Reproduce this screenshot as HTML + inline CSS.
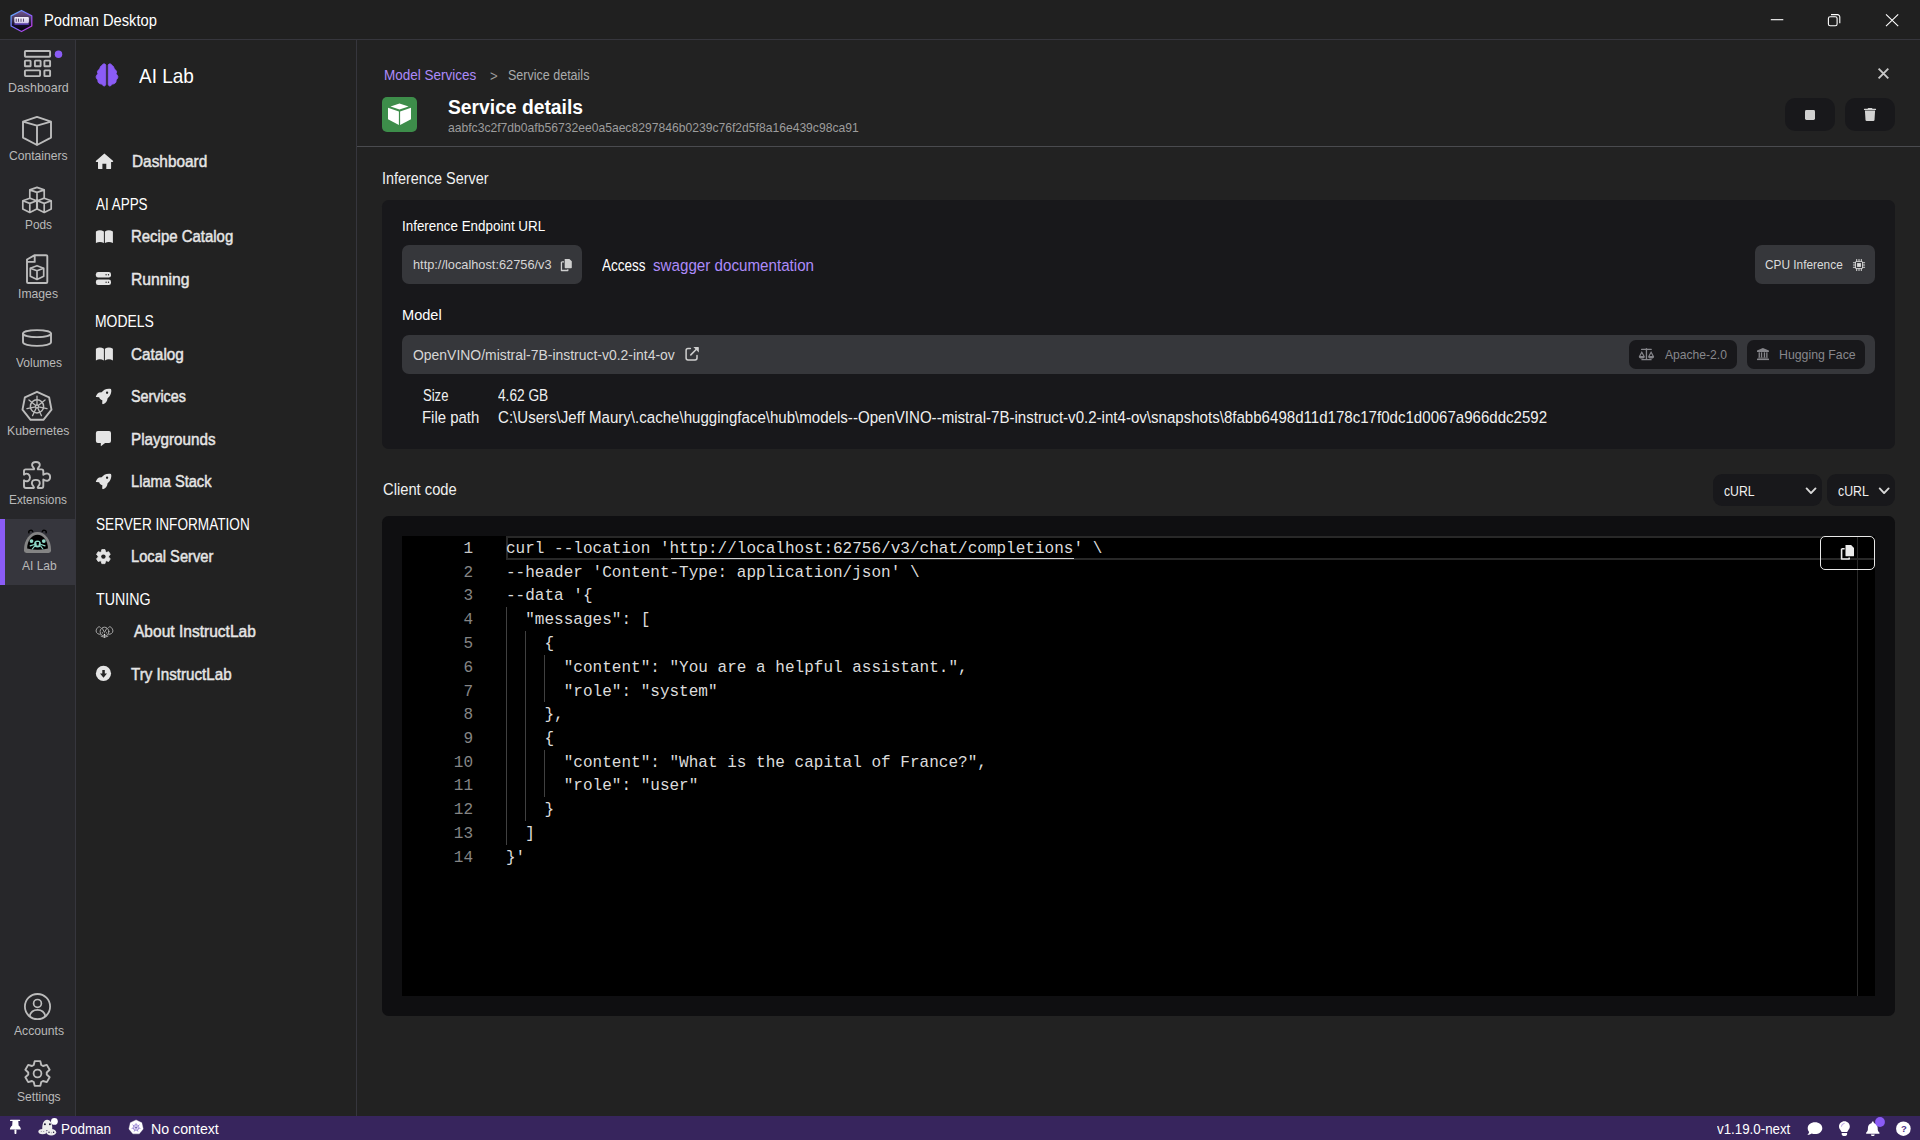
<!DOCTYPE html>
<html lang="en">
<head>
<meta charset="utf-8">
<title>Podman Desktop</title>
<style>
html,body{margin:0;padding:0}
body{width:1920px;height:1140px;overflow:hidden;background:#222222;position:relative;font-family:"Liberation Sans",sans-serif;color:#fff}
.b{position:absolute;box-sizing:border-box}
.t{position:absolute;white-space:pre;line-height:1;transform-origin:0 50%;font-family:"Liberation Sans",sans-serif}
.i{position:absolute;overflow:visible}
.ln{position:absolute;width:71px;text-align:right;font-family:"Liberation Mono",monospace;font-size:16.7px;line-height:19px;color:#858585;white-space:pre;transform-origin:100% 50%;transform:scaleX(0.9604)}
.cl{position:absolute;left:506.3px;font-family:"Liberation Mono",monospace;font-size:16.7px;line-height:19px;color:#dcdcdc;white-space:pre;transform-origin:0 50%;transform:scaleX(0.9604)}
.g{position:absolute;width:1px;background:#404040}
</style>
</head>
<body>
<!-- title bar -->
<div class="b" style="left:0;top:0;width:1920px;height:40px;background:#202020;border-bottom:1px solid #36363d"></div>
<!-- global nav -->
<div class="b" style="left:0;top:40px;width:76px;height:1076px;background:#27272a;border-right:1px solid #36363d"></div>
<div class="b" style="left:0;top:519px;width:75px;height:66px;background:#36363d;border-left:5px solid #8b5cf6"></div>
<!-- secondary nav -->
<div class="b" style="left:76px;top:40px;width:281px;height:1076px;background:#222222;border-right:1px solid #36363d"></div>
<!-- header border -->
<div class="b" style="left:357px;top:146px;width:1563px;height:1px;background:#4a4b4f"></div>
<!-- header buttons -->
<div class="b" style="left:382px;top:97px;width:35px;height:35px;border-radius:5px;background:#3d8d4a"></div>
<div class="b" style="left:1785px;top:98px;width:50px;height:33px;border-radius:10px;background:#18181b"></div>
<div class="b" style="left:1845px;top:98px;width:50px;height:33px;border-radius:10px;background:#18181b"></div>
<div class="b" style="left:1805px;top:109.5px;width:10.2px;height:10.2px;border-radius:1.4px;background:#d0d0d0"></div>
<!-- inference card -->
<div class="b" style="left:382px;top:200px;width:1513px;height:249px;border-radius:6.5px;background:#18181b"></div>
<div class="b" style="left:402px;top:245px;width:180px;height:39px;border-radius:7px;background:#36373b"></div>
<div class="b" style="left:1755px;top:245px;width:120px;height:39px;border-radius:7px;background:#36373b"></div>
<div class="b" style="left:402px;top:335px;width:1473px;height:39px;border-radius:7px;background:#36373b"></div>
<div class="b" style="left:1629px;top:340px;width:108px;height:29px;border-radius:7px;background:#18181b"></div>
<div class="b" style="left:1747px;top:340px;width:118px;height:29px;border-radius:7px;background:#18181b"></div>
<!-- selects -->
<div class="b" style="left:1713px;top:474px;width:109px;height:32px;border-radius:9px;background:#18181b"></div>
<div class="b" style="left:1827px;top:474px;width:68px;height:32px;border-radius:9px;background:#18181b"></div>
<!-- code card -->
<div class="b" style="left:382px;top:516px;width:1513px;height:500px;border-radius:6.5px;background:#0f0f11"></div>
<div class="b" style="left:402px;top:536px;width:1473px;height:460px;background:#000"></div>
<div class="b" style="left:506px;top:536px;width:1351px;height:24px;border:2px solid #282828"></div>
<div class="b" style="left:1857px;top:537px;width:1px;height:459px;background:#2a2a2a"></div>
<div class="ln" style="left:402px;top:539px;color:#c6c6c6">1</div>
<div class="cl" style="top:539px">curl --location &#x27;http://localhost:62756/v3/chat/completions&#x27; \</div>
<div class="ln" style="left:402px;top:563px;color:#858585">2</div>
<div class="cl" style="top:563px">--header &#x27;Content-Type: application/json&#x27; \</div>
<div class="ln" style="left:402px;top:586px;color:#858585">3</div>
<div class="cl" style="top:586px">--data &#x27;{</div>
<div class="ln" style="left:402px;top:610px;color:#858585">4</div>
<div class="cl" style="top:610px">  &quot;messages&quot;: [</div>
<div class="ln" style="left:402px;top:634px;color:#858585">5</div>
<div class="cl" style="top:634px">    {</div>
<div class="ln" style="left:402px;top:658px;color:#858585">6</div>
<div class="cl" style="top:658px">      &quot;content&quot;: &quot;You are a helpful assistant.&quot;,</div>
<div class="ln" style="left:402px;top:682px;color:#858585">7</div>
<div class="cl" style="top:682px">      &quot;role&quot;: &quot;system&quot;</div>
<div class="ln" style="left:402px;top:705px;color:#858585">8</div>
<div class="cl" style="top:705px">    },</div>
<div class="ln" style="left:402px;top:729px;color:#858585">9</div>
<div class="cl" style="top:729px">    {</div>
<div class="ln" style="left:402px;top:753px;color:#858585">10</div>
<div class="cl" style="top:753px">      &quot;content&quot;: &quot;What is the capital of France?&quot;,</div>
<div class="ln" style="left:402px;top:776px;color:#858585">11</div>
<div class="cl" style="top:776px">      &quot;role&quot;: &quot;user&quot;</div>
<div class="ln" style="left:402px;top:800px;color:#858585">12</div>
<div class="cl" style="top:800px">    }</div>
<div class="ln" style="left:402px;top:824px;color:#858585">13</div>
<div class="cl" style="top:824px">  ]</div>
<div class="ln" style="left:402px;top:848px;color:#858585">14</div>
<div class="cl" style="top:848px">}&#x27;</div>
<div class="b" style="left:670.5px;top:558px;width:403.1px;height:1px;background:#d0d0d0"></div>
<div class="g" style="left:506px;top:607px;height:238px"></div>
<div class="g" style="left:525px;top:631px;height:190px"></div>
<div class="g" style="left:544px;top:655px;height:47px"></div>
<div class="g" style="left:544px;top:750px;height:47px"></div>
<div class="b" style="left:1820px;top:536px;width:55px;height:34px;border-radius:5px;border:1px solid #e8e8e8;background:#000"></div>
<div class="b" style="left:1857px;top:537px;width:1px;height:32px;background:#2a2a2a"></div>
<div class="b" style="left:1821px;top:558px;width:53px;height:2px;background:#282828"></div>
<!-- status bar -->
<div class="b" style="left:0;top:1116px;width:1920px;height:24px;background:#37255d"></div>
<span class="t" style="left:43.68px;top:13px;font-size:15.94px;transform:scaleX(0.9235);color:#ffffff">Podman Desktop</span>
<span class="t" style="left:8.25px;top:81px;font-size:13.04px;transform:scaleX(0.9520);color:#b9b9b9">Dashboard</span>
<span class="t" style="left:9.20px;top:149px;font-size:13.04px;transform:scaleX(0.9307);color:#b9b9b9">Containers</span>
<span class="t" style="left:24.59px;top:218px;font-size:13.04px;transform:scaleX(0.9080);color:#b9b9b9">Pods</span>
<span class="t" style="left:18.26px;top:287px;font-size:13.04px;transform:scaleX(0.9356);color:#b9b9b9">Images</span>
<span class="t" style="left:15.50px;top:356px;font-size:13.04px;transform:scaleX(0.9214);color:#b9b9b9">Volumes</span>
<span class="t" style="left:6.86px;top:424px;font-size:13.04px;transform:scaleX(0.9360);color:#b9b9b9">Kubernetes</span>
<span class="t" style="left:9.39px;top:493px;font-size:13.04px;transform:scaleX(0.9094);color:#b9b9b9">Extensions</span>
<span class="t" style="left:21.70px;top:559px;font-size:13.04px;transform:scaleX(0.9218);color:#b9b9b9">AI Lab</span>
<span class="t" style="left:13.70px;top:1024px;font-size:13.04px;transform:scaleX(0.9337);color:#b9b9b9">Accounts</span>
<span class="t" style="left:16.70px;top:1090px;font-size:13.04px;transform:scaleX(0.9271);color:#b9b9b9">Settings</span>
<span class="t" style="left:138.70px;top:66px;font-size:20.29px;transform:scaleX(0.9356);color:#ffffff">AI Lab</span>
<span class="t" style="left:132.34px;top:154px;font-size:15.94px;transform:scaleX(0.9645);color:#e6e6e6;-webkit-text-stroke:0.45px #e6e6e6">Dashboard</span>
<span class="t" style="left:130.76px;top:229px;font-size:15.94px;transform:scaleX(0.9383);color:#e6e6e6;-webkit-text-stroke:0.45px #e6e6e6">Recipe Catalog</span>
<span class="t" style="left:130.72px;top:272px;font-size:15.94px;transform:scaleX(0.9843);color:#e6e6e6;-webkit-text-stroke:0.45px #e6e6e6">Running</span>
<span class="t" style="left:131.30px;top:347px;font-size:15.94px;transform:scaleX(0.9617);color:#e6e6e6;-webkit-text-stroke:0.45px #e6e6e6">Catalog</span>
<span class="t" style="left:131.30px;top:389px;font-size:15.94px;transform:scaleX(0.8979);color:#e6e6e6;-webkit-text-stroke:0.45px #e6e6e6">Services</span>
<span class="t" style="left:130.75px;top:432px;font-size:15.94px;transform:scaleX(0.9540);color:#e6e6e6;-webkit-text-stroke:0.45px #e6e6e6">Playgrounds</span>
<span class="t" style="left:130.78px;top:474px;font-size:15.94px;transform:scaleX(0.9178);color:#e6e6e6;-webkit-text-stroke:0.45px #e6e6e6">Llama Stack</span>
<span class="t" style="left:130.78px;top:549px;font-size:15.94px;transform:scaleX(0.9197);color:#e6e6e6;-webkit-text-stroke:0.45px #e6e6e6">Local Server</span>
<span class="t" style="left:133.80px;top:624px;font-size:15.94px;transform:scaleX(0.9755);color:#e6e6e6;-webkit-text-stroke:0.45px #e6e6e6">About InstructLab</span>
<span class="t" style="left:131.30px;top:667px;font-size:15.94px;transform:scaleX(0.9515);color:#e6e6e6;-webkit-text-stroke:0.45px #e6e6e6">Try InstructLab</span>
<span class="t" style="left:96.20px;top:197px;font-size:15.94px;transform:scaleX(0.8440);color:#ffffff">AI APPS</span>
<span class="t" style="left:95.43px;top:314px;font-size:15.94px;transform:scaleX(0.8740);color:#ffffff">MODELS</span>
<span class="t" style="left:96.20px;top:517px;font-size:15.94px;transform:scaleX(0.8538);color:#ffffff">SERVER INFORMATION</span>
<span class="t" style="left:96.30px;top:592px;font-size:15.94px;transform:scaleX(0.8930);color:#ffffff">TUNING</span>
<span class="t" style="left:384.07px;top:68px;font-size:14.49px;transform:scaleX(0.9328);color:#ad8bfa">Model Services</span>
<span class="t" style="left:489.70px;top:69px;font-size:14.49px;transform:scaleX(0.9125);color:#9d9d9d">&gt;</span>
<span class="t" style="left:508.30px;top:68px;font-size:14.49px;transform:scaleX(0.8643);color:#aaabac">Service details</span>
<span class="t" style="left:447.50px;top:97px;font-size:20.29px;transform:scaleX(0.9501);color:#ffffff;font-weight:700">Service details</span>
<span class="t" style="left:447.50px;top:121px;font-size:13.04px;transform:scaleX(0.9307);color:#9d9d9d">aabfc3c2f7db0afb56732ee0a5aec8297846b0239c76f2d5f8a16e439c98ca91</span>
<span class="t" style="left:381.60px;top:171px;font-size:15.94px;transform:scaleX(0.9046);color:#f0f0f0">Inference Server</span>
<span class="t" style="left:401.87px;top:219px;font-size:14.49px;transform:scaleX(0.9261);color:#ffffff">Inference Endpoint URL</span>
<span class="t" style="left:412.50px;top:258px;font-size:13.04px;transform:scaleX(0.9807);color:#d6d6d6">http://localhost:62756/v3</span>
<span class="t" style="left:602.20px;top:258px;font-size:15.94px;transform:scaleX(0.8482);color:#ffffff">Access</span>
<span class="t" style="left:652.80px;top:258px;font-size:15.94px;transform:scaleX(0.9516);color:#ad8bfa">swagger documentation</span>
<span class="t" style="left:1765.00px;top:258px;font-size:13.04px;transform:scaleX(0.9094);color:#dcdcdc">CPU Inference</span>
<span class="t" style="left:401.79px;top:308px;font-size:14.49px;transform:scaleX(1.0070);color:#ffffff">Model</span>
<span class="t" style="left:412.50px;top:348px;font-size:14.49px;transform:scaleX(0.9622);color:#d6d6d6">OpenVINO/mistral-7B-instruct-v0.2-int4-ov</span>
<span class="t" style="left:1665.00px;top:348px;font-size:13.04px;transform:scaleX(0.9292);color:#87878b">Apache-2.0</span>
<span class="t" style="left:1778.55px;top:348px;font-size:13.04px;transform:scaleX(0.9451);color:#87878b">Hugging Face</span>
<span class="t" style="left:422.80px;top:388px;font-size:15.94px;transform:scaleX(0.8189);color:#f0f0f0">Size</span>
<span class="t" style="left:497.80px;top:388px;font-size:15.94px;transform:scaleX(0.8592);color:#f0f0f0">4.62 GB</span>
<span class="t" style="left:421.86px;top:410px;font-size:15.94px;transform:scaleX(0.9365);color:#f0f0f0">File path</span>
<span class="t" style="left:497.80px;top:410px;font-size:15.94px;transform:scaleX(0.9456);color:#f0f0f0">C:\Users\Jeff Maury\.cache\huggingface\hub\models--OpenVINO--mistral-7B-instruct-v0.2-int4-ov\snapshots\8fabb6498d11d178c17f0dc1d0067a966ddc2592</span>
<span class="t" style="left:382.80px;top:482px;font-size:15.94px;transform:scaleX(0.9252);color:#f0f0f0">Client code</span>
<span class="t" style="left:1724.20px;top:484px;font-size:14.49px;transform:scaleX(0.8434);color:#f0f0f0">cURL</span>
<span class="t" style="left:1838.00px;top:484px;font-size:14.49px;transform:scaleX(0.8489);color:#f0f0f0">cURL</span>
<span class="t" style="left:61.27px;top:1122px;font-size:14.49px;transform:scaleX(0.9283);color:#ffffff">Podman</span>
<span class="t" style="left:151.02px;top:1122px;font-size:14.49px;transform:scaleX(0.9793);color:#ffffff">No context</span>
<span class="t" style="left:1716.70px;top:1122px;font-size:14.49px;transform:scaleX(0.9198);color:#ffffff">v1.19.0-next</span>
<svg class="i" style="left:0;top:0" width="1920" height="1140" viewBox="0 0 1920 1140">
<defs>
<linearGradient id="lgS" x1="0" y1="0" x2="1" y2="1"><stop offset="0" stop-color="#5fb6ff"/><stop offset="0.5" stop-color="#7b6cff"/><stop offset="1" stop-color="#d22fe0"/></linearGradient>
<linearGradient id="lgF" x1="0" y1="0" x2="0" y2="1"><stop offset="0" stop-color="#77578f"/><stop offset="0.35" stop-color="#4a3a63"/><stop offset="0.7" stop-color="#150d28"/><stop offset="1" stop-color="#05030c"/></linearGradient>
<linearGradient id="lgB" x1="0" y1="0" x2="0" y2="1"><stop offset="0" stop-color="#f4f0fa"/><stop offset="1" stop-color="#cfc4e6"/></linearGradient>
</defs>
<g><polygon points="21.5,10.5 31.8,15.9 31.8,26 21.5,31.5 11.1,26 11.1,15.9" fill="url(#lgF)" stroke="url(#lgS)" stroke-width="1.25" stroke-linejoin="round"/>
<rect x="14.4" y="23" width="14.4" height="2" fill="#5a3fb0" opacity="0.9"/>
<rect x="14.3" y="17" width="14.6" height="6.2" rx="1.1" fill="url(#lgB)"/>
<rect x="15.8" y="18.6" width="0.8" height="3.2" fill="#3a2c52"/>
<rect x="18.1" y="18.6" width="0.8" height="3.2" fill="#3a2c52"/>
<rect x="20.6" y="18.6" width="0.8" height="3.2" fill="#3a2c52"/>
<rect x="23.1" y="18.6" width="0.8" height="3.2" fill="#3a2c52"/>
</g>
<g stroke="#ffffff" stroke-width="1.1" fill="none"><path d="M1770.8 19.7H1783.3"/><rect x="1828.4" y="16.8" width="8.7" height="8.9" rx="1.8"/><path d="M1831 14.6H1837.4A2.4 2.4 0 0 1 1839.8 17V23.3"/><path d="M1886 14.4L1898.2 26.2M1898.2 14.4L1886 26.2"/></g>
<g stroke="#bcbcbc" stroke-width="1.9" fill="none" stroke-linejoin="round" stroke-linecap="round">
<rect x="24.9" y="51" width="25.2" height="5.7" rx="0.8"/>
<rect x="24.9" y="60.6" width="5.7" height="5.7" rx="0.6"/>
<rect x="34.9" y="60.6" width="5.7" height="5.7" rx="0.6"/>
<rect x="44.4" y="60.6" width="5.7" height="5.7" rx="0.6"/>
<rect x="24.9" y="70.4" width="15.2" height="5.7" rx="0.8"/><rect x="44.4" y="70.4" width="5.7" height="5.7" rx="0.6"/>
<path d="M37 116.9L51 121.7V137.6L37 145L23 137.6V121.7Z M23 121.7L37 125.7L51 121.7 M37 125.7V145"/>
<path stroke-width="1.7" d="M37 187.4L44.2 189.9V198.0L37 201.2L29.8 198.0V189.9Z M29.8 189.9L37 192.4L44.2 189.9 M37 192.4V201.2 M29.8 198.2L36.8 200.79999999999998V208.99999999999997L29.8 212.39999999999998L22.8 208.99999999999997V200.79999999999998Z M22.8 200.79999999999998L29.8 203.39999999999998L36.8 200.79999999999998 M29.8 203.39999999999998V212.39999999999998 M44.2 198.2L51.2 200.79999999999998V208.99999999999997L44.2 212.39999999999998L37.2 208.99999999999997V200.79999999999998Z M37.2 200.79999999999998L44.2 203.39999999999998L51.2 200.79999999999998 M44.2 203.39999999999998V212.39999999999998"/>
<path d="M34.7 255.2H46.2A1.1 1.1 0 0 1 47.3 256.3V281.9A1.1 1.1 0 0 1 46.2 283H28.1A1.1 1.1 0 0 1 27 281.9V259.5Z M34.7 255.2V261.9H27"/>
<path stroke-width="1.7" d="M37 265.7L43.7 268.25V276.15L37 279.45L30.3 276.15V268.25Z M30.3 268.25L37 270.8L43.7 268.25 M37 270.8V279.45"/>
<ellipse cx="37" cy="333.6" rx="14" ry="3.5"/><path d="M23 333.6V342.3A14 3.6 0 0 0 51 342.3V333.6"/>
<polygon points="37,391.8 49.1,397.3 51.5,409.6 43.4,419.8 30.6,419.8 22.5,409.6 24.9,397.3"/>
<circle cx="37" cy="406.4" r="6.6" stroke-width="1.5"/>
<path stroke-width="1.3" d="M37.00 404.80L37.00 396.10M38.25 405.40L45.05 399.98M38.56 406.76L47.04 408.69M37.69 407.84L41.47 415.68M36.31 407.84L32.53 415.68M35.44 406.76L26.96 408.69M35.75 405.40L28.95 399.98"/><circle cx="37" cy="406.4" r="1.5" stroke-width="1.2"/>
<path d="M34.00 469.39L25.75 469.39Q24.00 469.39 24.00 471.14L24.00 474.65C27.33 472.19 29.96 474.65 29.96 477.46C29.96 480.26 27.33 482.72 24.00 480.26L24.00 486.05Q24.00 487.98 25.93 487.98L33.82 487.98C35.05 486.58 31.89 485.88 31.89 483.25C31.89 480.96 33.82 479.91 35.82 479.91C37.86 479.91 39.79 480.96 39.79 483.25C39.79 485.88 36.63 486.58 37.86 487.98L41.54 487.98Q43.30 487.98 43.30 486.05L43.30 479.56C46.63 482.02 50.14 480.61 50.14 477.11C50.14 473.60 46.63 472.19 43.30 474.82L43.30 471.14Q43.30 469.39 41.54 469.39L37.86 469.39C36.81 467.98 39.79 467.28 39.79 465.00C39.79 463.07 38.04 462.02 35.93 462.02C33.82 462.02 32.07 463.07 32.07 465.00C32.07 467.28 35.05 467.98 34.00 469.39Z"/>
<circle cx="37.5" cy="1006.6" r="12.6" stroke-width="1.8"/><circle cx="37.5" cy="1003.4" r="3.9" stroke-width="1.7"/><path stroke-width="1.7" d="M29.6 1016.2C30.6 1011.8 33.6 1009.9 37.5 1009.9S44.4 1011.8 45.4 1016.2"/>
<polygon stroke-width="1.9" points="33.76,1064.99 34.69,1061.12 40.31,1061.12 41.24,1064.99 43.00,1066.00 46.82,1064.87 49.63,1069.74 46.74,1072.48 46.74,1074.52 49.63,1077.26 46.82,1082.13 43.00,1081.00 41.24,1082.01 40.31,1085.88 34.69,1085.88 33.76,1082.01 32.00,1081.00 28.18,1082.13 25.37,1077.26 28.26,1074.52 28.26,1072.48 25.37,1069.74 28.18,1064.87 32.00,1066.00"/>
<circle cx="37.5" cy="1073.5" r="3.9" stroke-width="1.8"/>
</g>
<circle cx="58.5" cy="54.2" r="3.75" fill="#8b5cf6"/>
<g>
<path d="M28.91 532.88A1.9 1.9 0 0 1 32.77 531.65M42.25 531.65A1.9 1.9 0 0 1 46.11 532.88" stroke="#000" stroke-width="1.4" fill="none" stroke-linecap="round"/>
<path d="M24.00 549.72A13.51 17.72 0 0 1 51.02 549.72V550.77Q51.02 552.88 48.56 552.88H26.46Q24.00 552.88 24.00 550.77Z" fill="#848484"/>
<path d="M27.16 548.49A10.35 13.68 0 0 1 47.86 548.49Q37.51 551.12 27.16 548.49Z" fill="#000"/>
<circle cx="31.5" cy="541.1" r="1.9" fill="#8fd9c8"/><circle cx="43.8" cy="541.1" r="1.9" fill="#8fd9c8"/>
<ellipse cx="37.5" cy="544" rx="3.4" ry="3.5" fill="#8fd9c8"/>
<path d="M36.28 542.00L39.09 542.00L38.56 545.51L36.81 545.51Z" fill="#000"/>
<path d="M34.35 544.46L30.14 545.86M34.70 546.21L32.25 549.02M41.02 544.46L45.05 545.86M40.67 546.21L42.95 549.02" stroke="#8fd9c8" stroke-width="1.1" fill="none" stroke-linecap="round"/>
</g>
<g fill="#8b5cf6" stroke="#8b5cf6" stroke-width="0.8" stroke-linejoin="round">
<polygon points="105.78,65.00 105.05,64.05 103.79,63.83 102.37,64.68 101.58,65.79 100.47,66.58 99.84,68.47 98.42,69.89 97.31,71.79 97.85,73.68 96.15,76.21 96.27,78.10 97.79,80.00 98.04,82.21 99.84,83.79 101.74,84.10 103.16,85.68 104.42,86.00 105.52,85.21 105.78,84.26"/>
<polygon points="108.21,65.00 108.93,64.05 110.20,63.83 111.62,64.68 112.41,65.79 113.51,66.58 114.14,68.47 115.57,69.89 116.67,71.79 116.13,73.68 117.84,76.21 117.71,78.10 116.20,80.00 115.94,82.21 114.14,83.79 112.25,84.10 110.83,85.68 109.57,86.00 108.46,85.21 108.21,84.26"/>
</g>
<g fill="#e4e4e4">
<path d="M104.4 153.6L113.2 161.1Q113.4 161.9 112.6 161.9H111.1V168.2Q111.1 169.1 110.2 169.1H106.3V163.7H102.4V169.1H98.9Q98 169.1 98 168.2V161.9H96.3Q95.5 161.9 95.8 161.1Z"/>
<path d="M95.9 231.4Q99.9 229.1 103.9 231.4V243.1Q99.9 240.9 95.9 243.1Z M104.9 231.4Q108.9 229.1 112.9 231.4V243.1Q108.9 240.9 104.9 243.1Z"/>
<path d="M95.9 348.7Q99.9 346.4 103.9 348.7V360.4Q99.9 358.2 95.9 360.4Z M104.9 348.7Q108.9 346.4 112.9 348.7V360.4Q108.9 358.2 104.9 360.4Z"/>
<rect x="95.9" y="272" width="15.1" height="5.5" rx="2.2"/><rect x="95.9" y="279.5" width="15.1" height="5.5" rx="2.2"/>
<g fill="#222"><circle cx="108.5" cy="274.75" r="0.65"/><circle cx="106.1" cy="274.75" r="0.65"/><circle cx="108.5" cy="282.25" r="0.65"/><circle cx="106.1" cy="282.25" r="0.65"/></g>
<path d="M110.95 388.89C108.53 388.47 106.16 388.82 104.45 389.87C103.39 390.53 102.47 391.45 101.68 392.37L99.05 392.58C98.13 392.68 96.68 394.74 95.89 396.45C95.79 396.84 96.03 397.11 96.42 397.11L99.18 397.16C99.45 398.42 100.37 399.61 102.34 400.26L102.21 403.55C102.34 404.08 103.00 404.34 103.53 404.08C105.63 403.16 107.34 401.05 107.61 398.16C109.05 397.11 110.37 395.26 110.95 393.16C111.42 391.58 111.47 390.00 110.95 388.89Z"/><circle cx="107.08" cy="392.76" r="1.15" fill="#222"/>
<path d="M110.95 473.89C108.53 473.47 106.16 473.82 104.45 474.87C103.39 475.53 102.47 476.45 101.68 477.37L99.05 477.58C98.13 477.68 96.68 479.74 95.89 481.45C95.79 481.84 96.03 482.11 96.42 482.11L99.18 482.16C99.45 483.42 100.37 484.61 102.34 485.26L102.21 488.55C102.34 489.08 103.00 489.34 103.53 489.08C105.63 488.16 107.34 486.05 107.61 483.16C109.05 482.11 110.37 480.26 110.95 478.16C111.42 476.58 111.47 475.00 110.95 473.89Z"/><circle cx="107.08" cy="477.76" r="1.15" fill="#222"/>
<path d="M97.9 431H109A2 2 0 0 1 111 433V441A2 2 0 0 1 109 443H105.1L101.2 446.1Q100.8 446.3 100.8 445.8V443H97.9A2 2 0 0 1 95.9 441V433A2 2 0 0 1 97.9 431Z"/>
<polygon stroke="#e4e4e4" stroke-width="0.8" stroke-linejoin="round" points="101.27,551.75 101.81,549.58 104.99,549.58 105.53,551.75 106.54,552.33 108.68,551.71 110.28,554.47 108.67,556.02 108.67,557.18 110.28,558.73 108.68,561.49 106.54,560.87 105.53,561.45 104.99,563.62 101.81,563.62 101.27,561.45 100.26,560.87 98.12,561.49 96.52,558.73 98.13,557.18 98.13,556.02 96.52,554.47 98.12,551.71 100.26,552.33"/><circle cx="103.4" cy="556.6" r="2.2" fill="#222"/>
<circle cx="103.46" cy="673.46" r="7.6"/><path fill="#222" d="M102.3 670H104.8V673.6H107L103.5 677.8L100 673.6H102.3Z"/>
</g>
<g stroke="#bdbdbd" stroke-width="0.85" fill="none" stroke-linecap="round" stroke-linejoin="round"><circle cx="104.5" cy="631.6" r="4.4"/><path d="M100.4 627.3C98.8 625.2 96.2 628.6 96.1 630.9C96 633 98.6 634.8 100.3 634.3"/><path d="M108.6 627.3C110.2 625.2 112.8 628.6 112.9 630.9C113 633 110.4 634.8 108.7 634.3"/><path d="M102.4 628.6L104.5 632.4L106.6 628.6M104.5 634.6V637.6M101 636.2Q104.5 638.8 108 636.2"/></g><circle cx="102.4" cy="632.8" r="0.6" fill="#bdbdbd"/><circle cx="106.6" cy="632.8" r="0.6" fill="#bdbdbd"/><circle cx="104.5" cy="634.5" r="0.75" fill="#eee"/>
<g fill="#fff"><polygon points="399.5,103.4 408.6,106.6 399.5,109.5 390.5,106.6"/><polygon points="388,107.8 398.9,111.4 398.9,125.1 388,119.2"/><polygon points="400.1,111.4 411,107.8 411,119.2 400.1,125.1"/></g>
<path d="M1878.6 68.6L1888.3 78.3M1888.3 68.6L1878.6 78.3" stroke="#c8c8c8" stroke-width="1.9" fill="none"/>
<g fill="#d2d2d2"><path d="M1868.2 108.1H1871.9L1872.6 108.8H1875.6Q1876.1 108.8 1876.1 109.4T1875.6 110H1864.4Q1863.9 110 1863.9 109.4T1864.4 108.8H1867.5Z"/><path d="M1864.9 110.6H1875.1L1874.5 120Q1874.4 121.1 1873.3 121.1H1866.7Q1865.6 121.1 1865.5 120Z"/></g>
<g><path d="M561.45 261.90H564.00M561.45 261.90V270.50H567.80V269.30" stroke="#cfcfcf" stroke-width="1.30" fill="none" stroke-linejoin="round"/><path d="M564.70 258.90H569.40L571.80 261.30V267.50Q571.80 268.20 571.10 268.20H565.40Q564.70 268.20 564.70 267.50Z" fill="#cfcfcf"/></g>
<g><path d="M1841.58 548.70H1844.64M1841.58 548.70V559.02H1849.20V557.58" stroke="#ececec" stroke-width="1.56" fill="none" stroke-linejoin="round"/><path d="M1845.48 545.10H1851.12L1854.00 547.98V555.42Q1854.00 556.26 1853.16 556.26H1846.32Q1845.48 556.26 1845.48 555.42Z" fill="#ececec"/></g>
<g fill="#dcdcdc">
<rect x="1856.2" y="258.9" width="1" height="12.2" rx="0.4"/>
<rect x="1858.5" y="258.9" width="1" height="12.2" rx="0.4"/>
<rect x="1860.8" y="258.9" width="1" height="12.2" rx="0.4"/>
<rect x="1852.9" y="262.2" width="12.2" height="1" rx="0.4"/>
<rect x="1852.9" y="264.5" width="12.2" height="1" rx="0.4"/>
<rect x="1852.9" y="266.8" width="12.2" height="1" rx="0.4"/>
<rect x="1855.2" y="261.2" width="7.6" height="7.6" rx="0.9"/></g>
<rect x="1856.55" y="262.55" width="4.9" height="4.9" fill="#dcdcdc" stroke="#36373b" stroke-width="1.1"/>
<g stroke="#cfcfcf" stroke-width="1.5" fill="none" stroke-linecap="round" stroke-linejoin="round"><path d="M690.4 348.5H688A1.9 1.9 0 0 0 686.1 350.4V358.1A1.9 1.9 0 0 0 688 360H695.1A1.9 1.9 0 0 0 697 358.1V355.4"/><path d="M690.8 354.9L697.6 348"/></g><path d="M693.4 347.1H698.2Q698.8 347.1 698.8 347.7V352.6Z" fill="#cfcfcf"/>
<g fill="#85858a" stroke="none"><rect x="1641" y="348.8" width="10.8" height="1.2" rx="0.5"/><rect x="1645.8" y="348.2" width="1.3" height="11.6"/><rect x="1641.3" y="359" width="10.4" height="1.3" rx="0.5"/><path d="M1641.8 351L1644.8 356.4A3 2 0 0 1 1638.8 356.4Z M1641.8 353.4L1640.4 356H1643.2Z" fill-rule="evenodd"/><path d="M1651.1 351L1654.1 356.4A3 2 0 0 1 1648.1 356.4Z M1651.1 353.4L1649.7 356H1652.5Z" fill-rule="evenodd"/></g>
<g fill="#85858a"><path d="M1762.9 347.9L1768.9 350.6V351.9H1757V350.6Z"/><rect x="1757" y="358.6" width="12" height="1.5"/><rect x="1758.2" y="357.6" width="9.6" height="0.8"/>
<rect x="1758.6" y="352.3" width="1.3" height="5.3"/>
<rect x="1760.9" y="352.3" width="1.3" height="5.3"/>
<rect x="1763.8" y="352.3" width="1.3" height="5.3"/>
<rect x="1766.2" y="352.3" width="1.3" height="5.3"/>
</g>
<g stroke="#d8d8d8" stroke-width="1.9" fill="none" stroke-linecap="round" stroke-linejoin="round"><path d="M1806.6 488.4L1811 493.1L1815.5 488.4"/><path d="M1879.7 488.4L1884.1 493.1L1888.6 488.4"/></g>
<g fill="#fff">
<path d="M10.6 1119.7H19.6Q20.2 1119.7 20.2 1120.4T19.6 1121.1H18.3L18.6 1125.6C19.9 1126.6 20.8 1128 20.9 1129.6H9.9C10 1128 10.9 1126.6 12.2 1125.6L12.5 1121.1H10.6Q10 1121.1 10 1120.4T10.6 1119.7Z"/><rect x="14.5" y="1129.6" width="1.9" height="4.3" rx="0.6"/>
</g>
<g fill="#ececec"><path d="M42.3 1130C42 1124 43.5 1119.8 47.1 1119.8S52.6 1124 52.2 1130Z"/><ellipse cx="42.6" cy="1131.6" rx="4.2" ry="2.6"/><ellipse cx="51.3" cy="1132.3" rx="4.9" ry="3.2"/></g><g fill="#1a1530"><circle cx="44.9" cy="1124.2" r="0.95"/><circle cx="49.9" cy="1124.2" r="0.95"/><circle cx="49" cy="1132.2" r="0.7"/><circle cx="53.6" cy="1132.2" r="0.7"/><circle cx="51.3" cy="1132.8" r="0.4"/><circle cx="41.2" cy="1131.6" r="0.45"/><circle cx="43.8" cy="1131.6" r="0.45"/></g><circle cx="54.4" cy="1121.4" r="3.4" fill="#fff"/>
<polygon fill="#fff" stroke="#fff" stroke-width="0.3" stroke-linejoin="round" points="136.05,1119.90 141.80,1122.67 143.22,1128.89 139.24,1133.87 132.86,1133.87 128.88,1128.89 130.30,1122.67"/>
<g stroke="#7a62c8" stroke-width="0.6" fill="none"><circle cx="136.05" cy="1127.55" r="2.9"/><path d="M136.05 1126.75L136.05 1122.95M136.68 1127.05L139.65 1124.68M136.83 1127.73L140.53 1128.57M136.40 1128.27L138.05 1131.69M135.70 1128.27L134.05 1131.69M135.27 1127.73L131.57 1128.57M135.42 1127.05L132.45 1124.68"/></g><circle cx="136.05" cy="1127.55" r="0.8" fill="#4a3a9a"/>
<path fill="#fff" d="M1815 1122.3C1819.1 1122.3 1822.3 1124.9 1822.3 1128.2S1819.1 1134.1 1815 1134.1C1813.8 1134.1 1812.7 1133.9 1811.7 1133.5C1810.6 1134.4 1809 1134.9 1807.4 1134.9C1808.3 1134 1808.9 1133 1809.2 1131.9C1808.2 1130.9 1807.7 1129.6 1807.7 1128.2C1807.7 1124.9 1810.9 1122.3 1815 1122.3Z"/>
<path fill="#fff" d="M1844.4 1121.3C1847.4 1121.3 1849.8 1123.6 1849.8 1126.5C1849.8 1128.3 1848.9 1129.4 1848.1 1130.4C1847.6 1131 1847.3 1131.6 1847.2 1132.1H1841.6C1841.5 1131.6 1841.2 1131 1840.7 1130.4C1839.9 1129.4 1839 1128.3 1839 1126.5C1839 1123.6 1841.4 1121.3 1844.4 1121.3Z"/><path fill="#fff" d="M1841.7 1132.9H1847.1V1134.2C1847.1 1135.2 1846.1 1136 1844.4 1136S1841.7 1135.2 1841.7 1134.2Z"/><path d="M1841.4 1126.3A3 3 0 0 1 1844.2 1123.4" stroke="#9a7ad8" stroke-width="0.7" fill="none" stroke-linecap="round"/>
<path fill="#fff" d="M1872.8 1121.6C1873.4 1121.6 1873.8 1122 1873.8 1122.6V1123.1C1876.2 1123.6 1877.7 1125.6 1877.7 1128.1V1129C1877.7 1130.4 1878.3 1131.6 1879.3 1132.5C1879.9 1133 1879.7 1133.7 1879 1133.7H1866.6C1865.9 1133.7 1865.7 1133 1866.3 1132.5C1867.3 1131.6 1867.9 1130.4 1867.9 1129V1128.1C1867.9 1125.6 1869.4 1123.6 1871.8 1123.1V1122.6C1871.8 1122 1872.2 1121.6 1872.8 1121.6ZM1870.9 1134.4H1874.7C1874.7 1135.4 1873.9 1136.1 1872.8 1136.1S1870.9 1135.4 1870.9 1134.4Z"/>
<circle cx="1880" cy="1122" r="4.9" fill="#8b5cf6"/>
<circle cx="1903.4" cy="1128.7" r="7.3" fill="#fff"/>
</svg>
<span class="t" style="left:1900.9px;top:1124.2px;font-size:9.5px;font-weight:700;color:#4a2f8a">?</span>
</body>
</html>
